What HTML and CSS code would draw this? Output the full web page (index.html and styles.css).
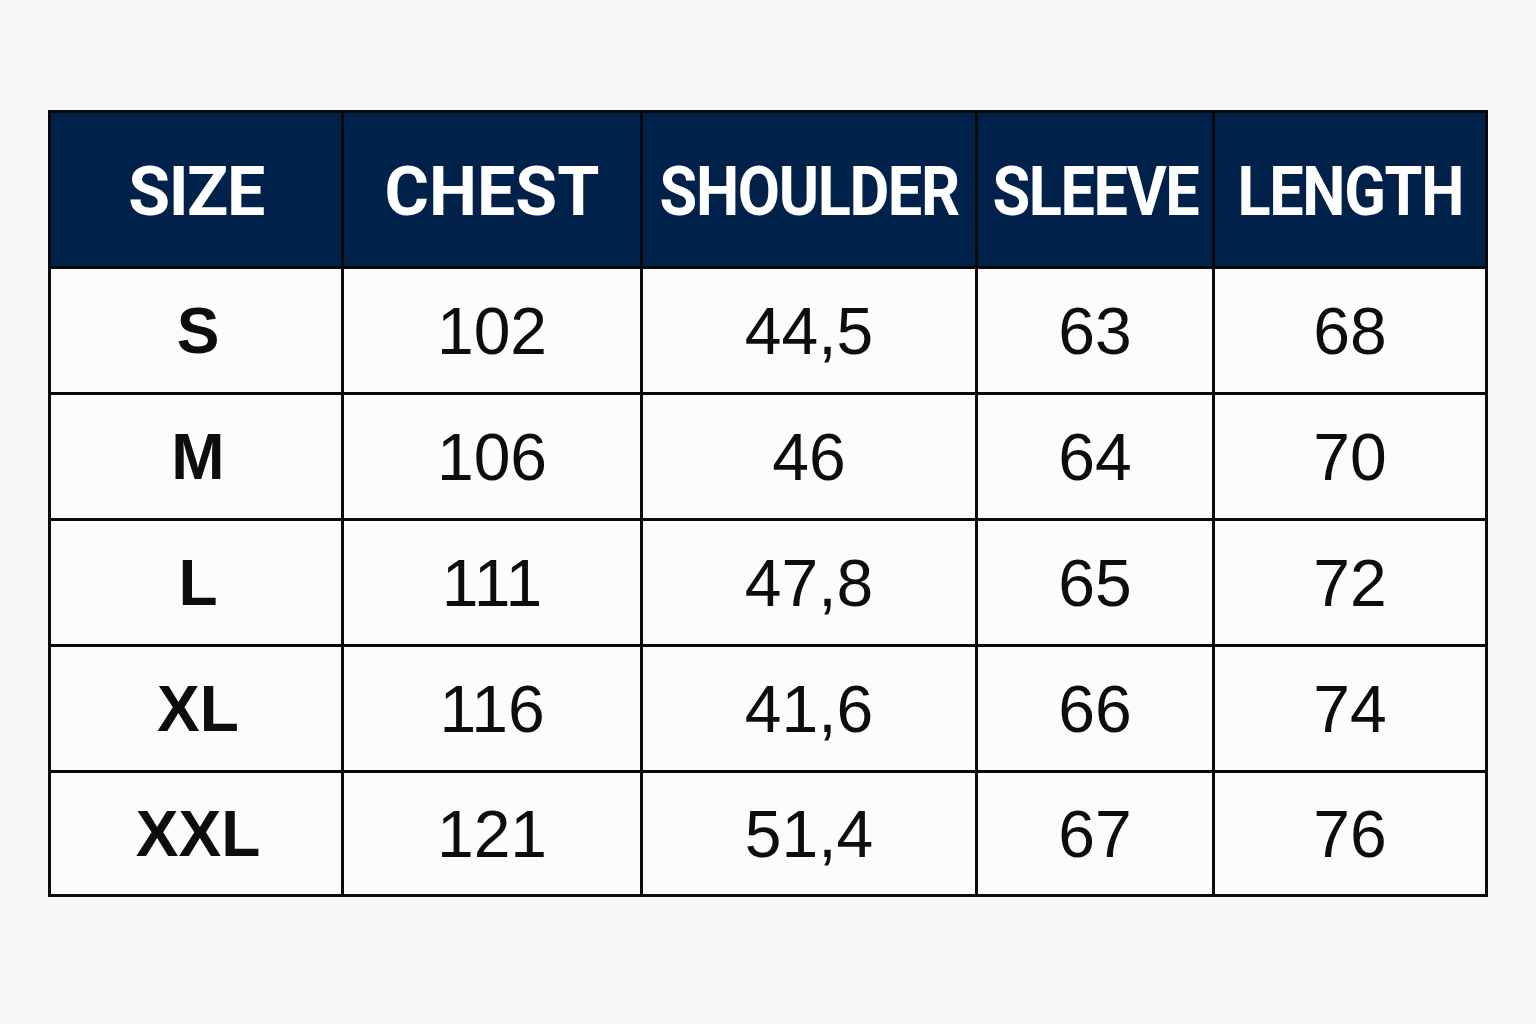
FILE: index.html
```html
<!DOCTYPE html>
<html>
<head>
<meta charset="utf-8">
<link rel="stylesheet" href="styles.css">
</head>
<body>
<main class="page">
  <table class="chart">
    <colgroup>
      <col class="c1"><col class="c2"><col class="c3"><col class="c4"><col class="c5">
    </colgroup>
    <thead>
      <tr>
        <th><span class="hd">SIZE</span></th>
        <th><span class="hd wide">CHEST</span></th>
        <th><span class="hd narrow">SHOULDER</span></th>
        <th><span class="hd narrow">SLEEVE</span></th>
        <th><span class="hd narrow">LENGTH</span></th>
      </tr>
    </thead>
    <tbody>
      <tr><td class="size">S</td><td>102</td><td>44,5</td><td>63</td><td>68</td></tr>
      <tr><td class="size">M</td><td>106</td><td>46</td><td>64</td><td>70</td></tr>
      <tr><td class="size">L</td><td>111</td><td>47,8</td><td>65</td><td>72</td></tr>
      <tr><td class="size">XL</td><td>116</td><td>41,6</td><td>66</td><td>74</td></tr>
      <tr class="last"><td class="size">XXL</td><td>121</td><td>51,4</td><td>67</td><td>76</td></tr>
    </tbody>
  </table>
</main>
</body>
</html>
```
FILE: styles.css
```css
html, body {
  margin: 0;
  padding: 0;
  background: #f7f7f7;
}
.page {
  padding: 110px 0 0 48px;
}
.chart {
  border-collapse: collapse;
  width: 1437px;
  table-layout: fixed;
  font-family: "Liberation Sans", Arial, sans-serif;
  background: #fcfcfc;
}
.c1 { width: 293px; }
.c2 { width: 299px; }
.c3 { width: 335px; }
.c4 { width: 237px; }
.c5 { width: 273px; }
.chart th, .chart td {
  border: 3px solid #0a0a0a;
  text-align: center;
  vertical-align: middle;
  padding: 0;
}
.chart th {
  height: 149px;
  background: #00214a;
  color: #ffffff;
  font-family: Roboto, "Liberation Sans", sans-serif;
  font-weight: 700;
  font-size: 68px;
  letter-spacing: -1.5px;
  padding-top: 4px;
}
.hd {
  display: inline-block;
}
.hd.wide {
  letter-spacing: 0px;
}
.hd.narrow {
  transform: scaleX(0.9);
}
.chart td {
  height: 123px;
  color: #0d0d0d;
  font-size: 66px;
  font-weight: 400;
  padding-top: 0;
}
.chart td.size {
  font-weight: 700;
  font-size: 64px;
  padding-left: 4px;
}
.chart tr.last td {
  height: 121px;
}
```
